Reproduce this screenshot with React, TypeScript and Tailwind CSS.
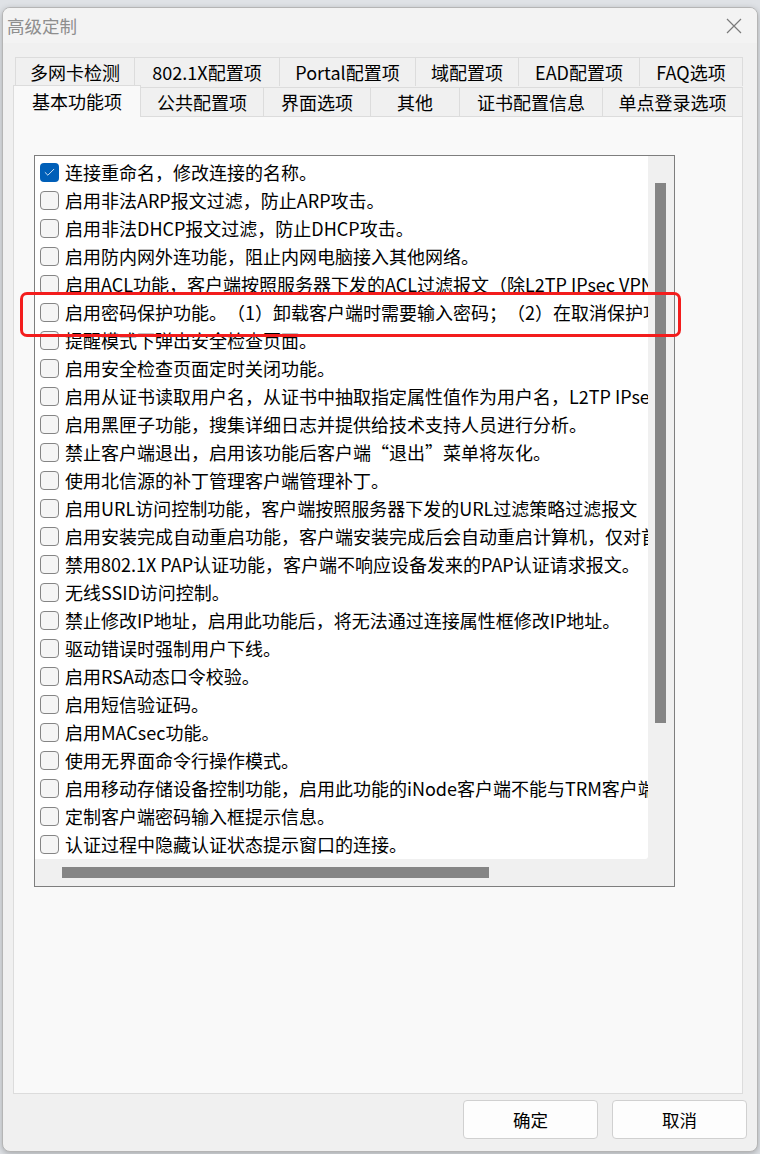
import { Check } from "lucide-react"

const font = { fontFamily: '"Noto Sans CJK SC", "Noto Sans", sans-serif' }

const topTabs = [
  { label: "多网卡检测", w: "w-[120px]" },
  { label: "802.1X配置项", w: "w-[145px]" },
  { label: "Portal配置项", w: "w-[136px]" },
  { label: "域配置项", w: "w-[103px]" },
  { label: "EAD配置项", w: "w-[121px]" },
  { label: "FAQ选项", w: "w-[103px]" },
]

const frontTabs = [
  { label: "基本功能项", w: "w-[128px]", active: true },
  { label: "公共配置项", w: "w-[123px]" },
  { label: "界面选项", w: "w-[107px]" },
  { label: "其他", w: "w-[89px]" },
  { label: "证书配置信息", w: "w-[143px]" },
  { label: "单点登录选项", w: "w-[140px]" },
]

const options = [
  { text: "连接重命名，修改连接的名称。", checked: true },
  { text: "启用非法ARP报文过滤，防止ARP攻击。" },
  { text: "启用非法DHCP报文过滤，防止DHCP攻击。" },
  { text: "启用防内网外连功能，阻止内网电脑接入其他网络。" },
  { text: "启用ACL功能，客户端按照服务器下发的ACL过滤报文（除L2TP IPsec VPN连接外）。" },
  { text: "启用密码保护功能。（1）卸载客户端时需要输入密码；（2）在取消保护功能时需要输入密码。" },
  { text: "提醒模式下弹出安全检查页面。" },
  { text: "启用安全检查页面定时关闭功能。" },
  { text: "启用从证书读取用户名，从证书中抽取指定属性值作为用户名，L2TP IPsec VPN连接除外。" },
  { text: "启用黑匣子功能，搜集详细日志并提供给技术支持人员进行分析。" },
  { text: "禁止客户端退出，启用该功能后客户端\u201c退出\u201d菜单将灰化。" },
  { text: "使用北信源的补丁管理客户端管理补丁。" },
  { text: "启用URL访问控制功能，客户端按照服务器下发的URL过滤策略过滤报文" },
  { text: "启用安装完成自动重启功能，客户端安装完成后会自动重启计算机，仅对首次安装有效。" },
  { text: "禁用802.1X PAP认证功能，客户端不响应设备发来的PAP认证请求报文。" },
  { text: "无线SSID访问控制。" },
  { text: "禁止修改IP地址，启用此功能后，将无法通过连接属性框修改IP地址。" },
  { text: "驱动错误时强制用户下线。" },
  { text: "启用RSA动态口令校验。" },
  { text: "启用短信验证码。" },
  { text: "启用MACsec功能。" },
  { text: "使用无界面命令行操作模式。" },
  { text: "启用移动存储设备控制功能，启用此功能的iNode客户端不能与TRM客户端同时使用。" },
  { text: "定制客户端密码输入框提示信息。" },
  { text: "认证过程中隐藏认证状态提示窗口的连接。" },
]

export default function App() {
  return (
    <div
      className="relative w-[760px] h-[1154px] overflow-hidden bg-[#dfe2e6] pt-[7px] pl-[2px] pr-[2px] pb-[2px] [text-spacing-trim:space-all]"
      style={font}
    >
      {/* Dialog */}
      <div className="flex h-full flex-col overflow-hidden rounded-[8px] border border-[#b5b5b5] bg-[#f0f0f0] shadow-[0_2px_6px_rgba(0,0,0,0.25)]">
        {/* Title bar */}
        <div className="flex h-[35px] shrink-0 items-center justify-between bg-[#f3f3f3] pl-[4px] pr-[15px]">
          <span className="text-[17.5px] leading-none text-[#8e8e8e]">高级定制</span>
          <svg width="16" height="16" viewBox="0 0 16 16" className="text-[#7a7a7a]">
            <path d="M1 1L15 15M15 1L1 15" stroke="currentColor" strokeWidth="1.2" />
          </svg>
        </div>

        {/* Tabs */}
        <div className="mt-[14px] pl-[10px]">
          <div className="flex pl-[2px]">
            {topTabs.map((t) => (
              <div
                key={t.label}
                className={`${t.w} flex h-[29px] items-center justify-center border-t border-r border-[#dcdcdc] first:border-l bg-[#f0f0f0] text-[18px] leading-none text-black`}
              >
                {t.label}
              </div>
            ))}
          </div>
          <div className="relative z-10 -mt-[2px] flex h-[32px] items-end">
            {frontTabs.map((t) =>
              t.active ? (
                <div
                  key={t.label}
                  className={`${t.w} -mb-px flex h-[32px] items-center justify-center border-t border-l border-r border-[#dcdcdc] bg-[#f9f9f9] pb-[2px] text-[18px] leading-none text-black`}
                >
                  {t.label}
                </div>
              ) : (
                <div
                  key={t.label}
                  className={`${t.w} flex h-[29px] items-center justify-center border-t border-r border-[#dcdcdc] bg-[#f0f0f0] text-[18px] leading-none text-black`}
                >
                  {t.label}
                </div>
              )
            )}
          </div>

          {/* Tab pane */}
          <div className="h-[978px] w-[730px] border border-[#dcdcdc] bg-[#f9f9f9] pl-[20px] pt-[38px]">
            <div className="grid h-[732px] w-[641px] grid-cols-[1fr_26px] grid-rows-[1fr_27px] border border-[#7e7e7e] bg-[#f0f0f0]">
              <div className="overflow-hidden rounded-br-[3px] bg-white pt-[2px]">
                {options.map((o) => (
                  <div key={o.text} className="flex h-[28px] items-center gap-[6px] whitespace-nowrap pl-[5px]">
                    {o.checked ? (
                      <span className="flex h-[19px] w-[19px] shrink-0 items-center justify-center rounded-[4px] bg-[#005fb8]">
                        <Check className="h-[13px] w-[13px] text-white" strokeWidth={1.5} />
                      </span>
                    ) : (
                      <span className="h-[19px] w-[19px] shrink-0 rounded-[4px] border border-[#858585] bg-[#f5f5f5]" />
                    )}
                    <span className="text-[18px] leading-none text-black">{o.text}</span>
                  </div>
                ))}
              </div>
              {/* Vertical scrollbar */}
              <div className="pl-[7px] pt-[27px]">
                <div className="h-[540px] w-[11px] bg-[#858585]" />
              </div>
              {/* Horizontal scrollbar */}
              <div className="pl-[27px] pt-[8px]">
                <div className="h-[11px] w-[427px] bg-[#858585]" />
              </div>
              <div />
            </div>
          </div>
        </div>

        {/* Buttons */}
        <div className="mt-[6px] flex justify-end gap-[14px] pr-[10px]">
          <button className="h-[39px] w-[135px] rounded-[4px] border border-[#d0d0d0] bg-[#fdfdfd] text-[17.5px] leading-none text-black">
            确定
          </button>
          <button className="h-[39px] w-[135px] rounded-[4px] border border-[#d0d0d0] bg-[#fdfdfd] text-[17.5px] leading-none text-black">
            取消
          </button>
        </div>
      </div>

      {/* Annotation highlight */}
      <div className="absolute left-[20px] top-[292px] h-[45px] w-[661px] rounded-[7px] border-[3px] border-[#f31d1d]" />
    </div>
  )
}
